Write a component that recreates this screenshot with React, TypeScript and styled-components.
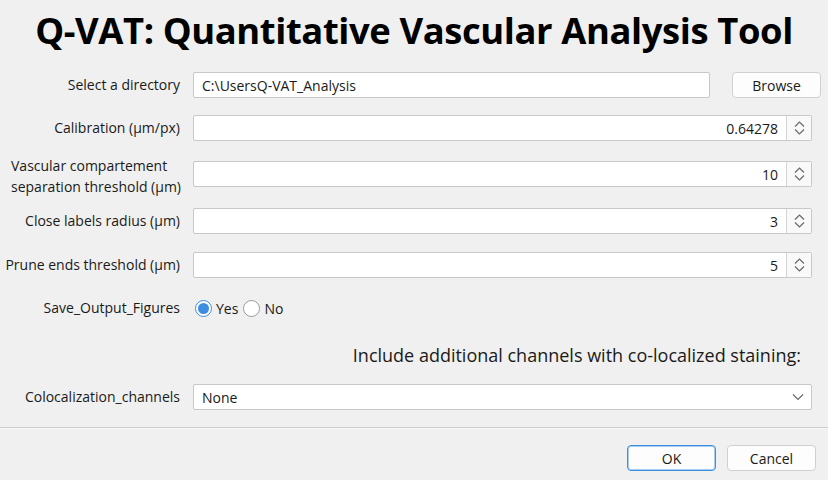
import React from 'react';
import styled, { createGlobalStyle } from 'styled-components';

const GlobalStyle = createGlobalStyle`
    html, body {
        margin: 0;
        padding: 0;
        background: #f0f0f0;
    }
    body {
        font-family: 'Open Sans', 'Noto Sans', sans-serif;
        color: #1a1a1a;
    }
`;

const Dialog = styled.div`
    width: 828px;
    height: 480px;
    background: #f0f0f0;
    display: flex;
    flex-direction: column;
    overflow: hidden;
`;

const Title = styled.h1`
    margin: 8px 0 0;
    height: 44px;
    font-size: 36.4px;
    line-height: 44px;
    font-weight: 700;
    color: #000;
    text-align: center;
    letter-spacing: -0.4px;
`;

const Form = styled.div`
    display: flex;
    flex-direction: column;
    padding-right: 16px;
`;

const Row = styled.div<{ $top: number }>`
    display: flex;
    align-items: center;
    margin-top: ${p => p.$top}px;
    height: 26px;
`;

const Label = styled.label`
    width: 180px;
    flex: none;
    text-align: right;
    font-size: 14px;
    line-height: 20px;
    color: #1a1a1a;
    padding-right: 13px;
    box-sizing: content-box;
    white-space: nowrap;
`;

const LabelLines = styled.span`
    display: inline-block;
    text-align: left;
    line-height: 21px;
    margin-top: 4px;
    margin-right: -1px;
`;

const Field = styled.div`
    flex: 1;
    height: 26px;
    box-sizing: border-box;
    background: #fff;
    border: 1px solid #c8c8c8;
    border-radius: 2px;
    display: flex;
    align-items: center;
    font-size: 14px;
    color: #1a1a1a;
`;

const FieldText = styled.span<{ $right?: boolean }>`
    flex: 1;
    padding: 0 8px;
    text-align: ${p => (p.$right ? 'right' : 'left')};
    white-space: nowrap;
`;

const Spinner = styled.div`
    width: 24px;
    height: 100%;
    border-left: 1px solid #d4d4d4;
    display: flex;
    align-items: center;
    justify-content: center;
    background: #f9f9f9;
`;

const Chevron = styled.div`
    width: 26px;
    height: 100%;
    display: flex;
    align-items: center;
    justify-content: center;
`;

const Button = styled.button<{ $primary?: boolean }>`
    width: 89px;
    height: 26px;
    box-sizing: border-box;
    background: #fdfdfd;
    border: 1px solid ${p => (p.$primary ? '#3c8ee0' : '#d0d0d0')};
    box-shadow: ${p => (p.$primary ? 'inset 0 0 0 1px #a9cdf2' : 'none')};
    border-radius: 4px;
    font-family: inherit;
    font-size: 14px;
    color: #1a1a1a;
    padding: 0;
`;

const BrowseButton = styled(Button)`
    margin-left: 22px;
    margin-right: -9px;
`;

const RadioGroup = styled.div`
    display: flex;
    align-items: center;
    font-size: 14px;
`;

const RadioOption = styled.span`
    display: flex;
    align-items: center;
    gap: 4px;
    margin-right: 3px;
`;

const RadioDot = styled.span<{ $checked?: boolean }>`
    width: 17px;
    height: 17px;
    box-sizing: border-box;
    border-radius: 50%;
    background: #fff;
    border: 1px solid ${p => (p.$checked ? '#3b8ee0' : '#9a9a9a')};
    display: flex;
    align-items: center;
    justify-content: center;
    margin-left: 2px;

    &::after {
        content: '';
        width: 11px;
        height: 11px;
        border-radius: 50%;
        background: ${p => (p.$checked ? '#3b8ee0' : 'transparent')};
    }
`;

const Note = styled.div`
    margin-top: 22px;
    text-align: right;
    font-size: 18px;
    line-height: 24px;
    color: #1a1a1a;
    padding-right: 27px;
`;

const Separator = styled.hr`
    margin: 17px 0 0;
    border: none;
    border-top: 1px solid #cdcdcd;
    border-bottom: 1px solid #f8f8f8;
`;

const Footer = styled.div`
    display: flex;
    justify-content: flex-end;
    gap: 11px;
    padding: 16px 12px 0 0;
`;

const SpinIcon = () => (
    <svg width="11" height="16" viewBox="0 0 11 16" fill="none" stroke="#6a6a6a" strokeWidth="1.2">
        <path d="M1 6.5 L5.5 2 L10 6.5" />
        <path d="M1 9.5 L5.5 14 L10 9.5" />
    </svg>
);

const DownIcon = () => (
    <svg width="12" height="8" viewBox="0 0 12 8" fill="none" stroke="#6a6a6a" strokeWidth="1.2">
        <path d="M1 1.5 L6 6.5 L11 1.5" />
    </svg>
);

type NumberRowProps = {
    label: React.ReactNode;
    value: string;
    top: number;
};

const NumberRow = ({ label, value, top }: NumberRowProps) => (
    <Row $top={top}>
        <Label>{label}</Label>
        <Field>
            <FieldText $right>{value}</FieldText>
            <Spinner>
                <SpinIcon />
            </Spinner>
        </Field>
    </Row>
);

export default function App() {
    return (
        <Dialog>
            <GlobalStyle />
            <Title>Q-VAT: Quantitative Vascular Analysis Tool</Title>
            <Form>
                <Row $top={20}>
                    <Label>Select a directory</Label>
                    <Field>
                        <FieldText>C:\UsersQ-VAT_Analysis</FieldText>
                    </Field>
                    <BrowseButton>Browse</BrowseButton>
                </Row>
                <NumberRow top={17} label="Calibration (µm/px)" value="0.64278" />
                <NumberRow
                    top={20}
                    label={
                        <LabelLines>
                            Vascular compartement
                            <br />
                            separation threshold (µm)
                        </LabelLines>
                    }
                    value="10"
                />
                <NumberRow top={21} label="Close labels radius (µm)" value="3" />
                <NumberRow top={18} label="Prune ends threshold (µm)" value="5" />
                <Row $top={17}>
                    <Label>Save_Output_Figures</Label>
                    <RadioGroup>
                        <RadioOption>
                            <RadioDot $checked />
                            Yes
                        </RadioOption>
                        <RadioOption>
                            <RadioDot />
                            No
                        </RadioOption>
                    </RadioGroup>
                </Row>
            </Form>
            <Note>Include additional channels with co-localized staining:</Note>
            <Form>
                <Row $top={17}>
                    <Label>Colocalization_channels</Label>
                    <Field>
                        <FieldText>None</FieldText>
                        <Chevron>
                            <DownIcon />
                        </Chevron>
                    </Field>
                </Row>
            </Form>
            <Separator />
            <Footer>
                <Button $primary>OK</Button>
                <Button>Cancel</Button>
            </Footer>
        </Dialog>
    );
}
